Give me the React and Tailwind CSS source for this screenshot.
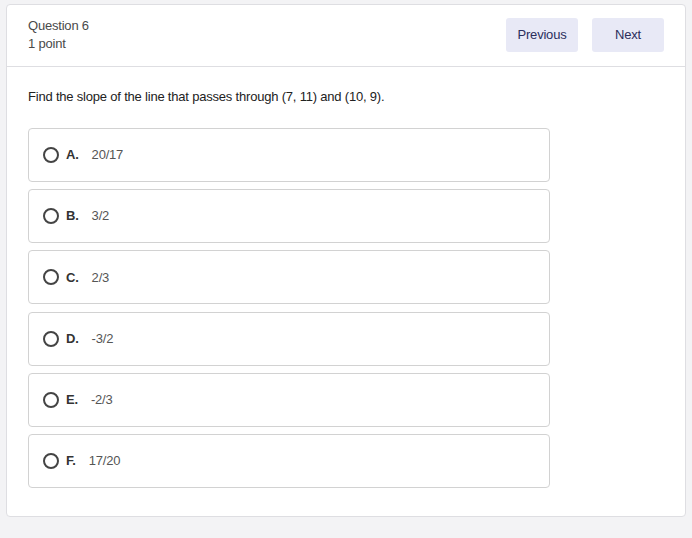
export default function App() {
  const options = [
    ["A.", "20/17"],
    ["B.", "3/2"],
    ["C.", "2/3"],
    ["D.", "-3/2"],
    ["E.", "-2/3"],
    ["F.", "17/20"],
  ];
  return (
    <div className="min-h-screen bg-[#f3f3f5] pt-[4px] pl-[6px] tracking-[-0.2px]" style={{ fontFamily: '"Liberation Sans", Arial, sans-serif' }}>
      <div className="w-[680px] h-[513px] bg-white border border-[#dedee2] rounded-[4px]">
        <div className="h-[62px] border-b border-[#dedee2] flex items-center justify-between px-[21px]">
          <div className="text-[13px] leading-[18px] text-[#4a4a4a] -mt-[2px]">
            <div>Question 6</div>
            <div>1 point</div>
          </div>
          <div className="flex gap-[14px] -mt-[1px]">
            <button className="w-[72px] h-[34px] rounded-[3px] bg-[#e8e9f6] text-[13px] text-[#2b2e5c]">Previous</button>
            <button className="w-[72px] h-[34px] rounded-[3px] bg-[#e8e9f6] text-[13px] text-[#2b2e5c]">Next</button>
          </div>
        </div>
        <div className="px-[21px] pt-[21px]">
          <div className="text-[13px] leading-[18px] text-[#222]">
            Find the slope of the line that passes through (7, 11) and (10, 9).
          </div>
          <div className="mt-[22px] flex flex-col gap-[7.2px]">
            {options.map(([l, v]) => (
              <div key={l} className="w-[522px] h-[54px] border border-[#d2d2d2] rounded-[4px] flex items-center pl-[14px]">
                <div className="w-[16px] h-[16px] rounded-full border-2 border-[#444]" />
                <span className="ml-[7px] text-[13px] font-bold text-[#333]">{l}</span>
                <span className="ml-[13px] text-[13px] text-[#555]">{v}</span>
              </div>
            ))}
          </div>
        </div>
      </div>
    </div>
  );
}
